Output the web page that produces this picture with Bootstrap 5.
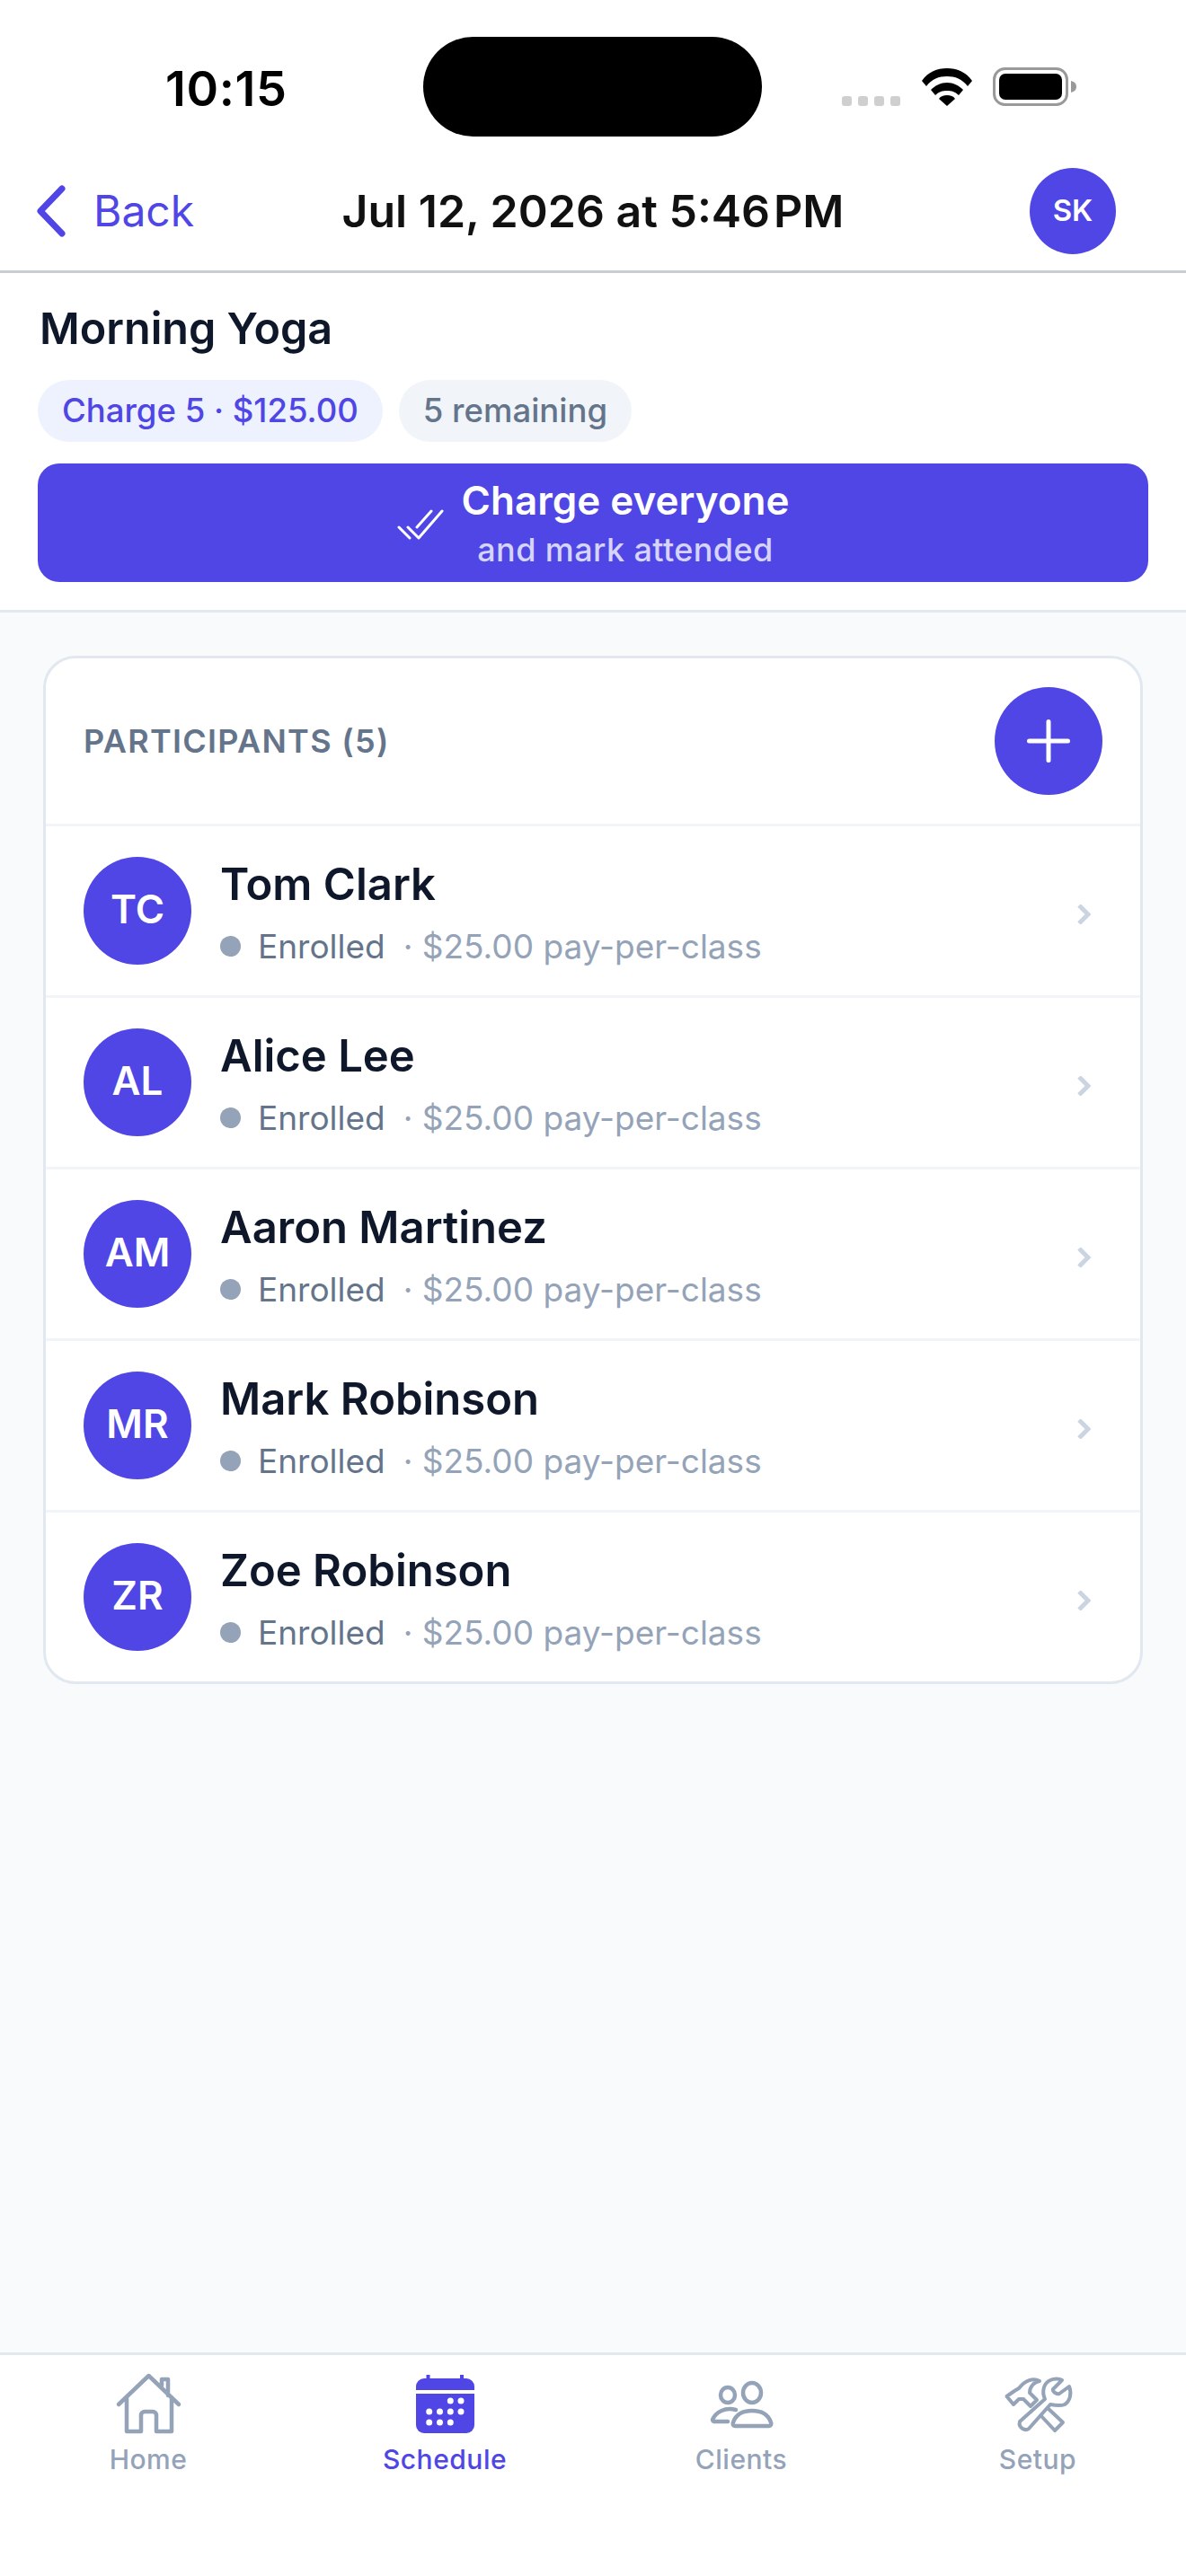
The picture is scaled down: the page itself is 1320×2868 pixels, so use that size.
<!DOCTYPE html>
<html lang="en">

<head>
    <meta charset="UTF-8">
    <meta name="viewport" content="width=device-width, initial-scale=1.0">
    <title>Morning Yoga</title>
    <link href="https://cdn.jsdelivr.net/npm/bootstrap@5.3.0/dist/css/bootstrap.min.css" rel="stylesheet">
    <style>
        body {
            font-family: Inter, "Liberation Sans", sans-serif;
            background: #f8fafc;
            color: #0f172a;
        }

        .app-screen {
            width: 1320px;
            height: 2868px;
        }

        .indigo-fill {
            background: #4f46e5;
            color: #fff;
        }

        .status-bar {
            height: 165px;
            padding: 41px 0 0 185px;
        }

        .status-time {
            width: 131px;
            flex-shrink: 0;
            margin-top: 31px;
            margin-left: -1px;
            margin-right: 1px;
            font-size: 54px;
            line-height: 54px;
            font-weight: 600;
            color: #000;
            letter-spacing: .6px;
            white-space: nowrap;
        }

        .island {
            width: 377px;
            height: 111px;
            flex-shrink: 0;
            margin-left: 155px;
            border-radius: 56px;
            background: #000;
        }

        .status-icons {
            margin-left: 89px;
            margin-top: 34px;
            height: 43px;
        }

        .signal-dot {
            width: 11px;
            height: 11px;
            border-radius: 3px;
            background: #cfcfcf;
            margin-right: 7px;
        }

        .wifi-ico {
            margin-left: 16px;
        }

        .batt-ico {
            margin-left: 22px;
        }

        .nav-row {
            height: 139px;
            padding: 4px 78px 0;
            border-bottom: 3px solid #c9ccd1;
        }

        .nav-back {
            color: #4f46e5;
            font-size: 48px;
            line-height: 60px;
            margin-left: -38px;
        }

        .back-ico {
            margin-right: 30px;
        }

        .nav-title {
            font-size: 50px;
            line-height: 60px;
            font-weight: 600;
            color: #111;
            white-space: nowrap;
        }

        .thin-gap {
            margin-left: 4px;
        }

        .user-dot {
            width: 96px;
            height: 96px;
            font-size: 33px;
            font-weight: 600;
        }

        .class-head {
            padding: 34px 42px 31px;
            border-bottom: 3px solid #e2e8f0;
        }

        .class-title {
            font-size: 48.500px;
            line-height: 56px;
            font-weight: 600;
            margin: 0 0 29px 2px;
        }

        .pill {
            height: 69px;
            padding: 0 27px;
            border-radius: 35px;
            font-size: 36.500px;
            font-weight: 500;
        }

        .pill-gap {
            gap: 18px;
        }

        .pill-charge {
            background: #eef2ff;
            color: #4f46e5;
        }

        .pill-left {
            background: #f1f5f9;
            color: #64748b;
        }

        .charge-btn {
            margin-top: 24px;
            height: 132px;
            padding-top: 4px;
            border-radius: 24px;
            background: #4f46e5;
            color: #fff;
            border: 0;
        }

        .tick-ico {
            margin-right: 20px;
        }

        .charge-main {
            font-size: 44px;
            line-height: 52px;
            font-weight: 600;
        }

        .charge-sub {
            font-size: 36px;
            line-height: 50px;
            margin-top: 4px;
            font-weight: 500;
            color: #d6d4fa;
            letter-spacing: .4px;
        }

        .people-card {
            margin: 48px 48px 0;
            border: 3px solid #e2e8f0;
            border-radius: 36px;
            overflow: hidden;
            background: #fff;
        }

        .people-head {
            height: 187px;
            padding: 0 42px;
            border-bottom: 3px solid #f1f5f9;
        }

        .people-label {
            font-size: 36px;
            font-weight: 600;
            color: #64748b;
            letter-spacing: 1.300px;
        }

        .add-btn {
            width: 120px;
            height: 120px;
            padding: 0;
            border: 0;
            background: #4f46e5;
        }

        .person-row {
            height: 191px;
            padding: 0 42px;
            border-bottom: 3px solid #f1f5f9;
        }

        .person-row:last-child {
            height: 188px;
            border-bottom: 0;
        }

        .person-dot {
            width: 120px;
            height: 120px;
            padding-bottom: 4px;
            font-size: 44px;
            font-weight: 600;
            margin-right: 32px;
        }

        .person-text {
            padding-top: 3px;
        }

        .person-name {
            font-size: 49px;
            line-height: 58px;
            font-weight: 600;
        }

        .person-sub {
            font-size: 37px;
            line-height: 44px;
            margin-top: 18px;
            color: #94a3b8;
        }

        .state-dot {
            width: 23px;
            height: 23px;
            background: #94a3b8;
            margin-right: 19px;
        }

        .state-text {
            color: #64748b;
            margin-right: 20px;
        }

        .row-chev {
            margin: 8px 13px 0 0;
        }

        .tab-bar {
            height: 249px;
            border-top: 3px solid #e2e8f0;
            background: #fff;
        }

        .tab-item {
            width: 330px;
            padding-top: 19px;
            font-size: 30px;
            line-height: 40px;
            letter-spacing: .5px;
            color: #94a3b8;
            font-weight: 500;
        }

        .tab-item svg {
            display: block;
            width: 72px;
            height: 72px;
            margin-bottom: 5px;
            overflow: visible;
        }

        .tab-on {
            color: #4f46e5;
        }
    </style>
</head>

<body>
    <div class="app-screen d-flex flex-column">
        <div class="bg-white">
            <div class="status-bar d-flex align-items-start">
                <div class="status-time">10:15</div>
                <div class="island"></div>
                <div class="status-icons d-flex align-items-end">
                    <span class="signal-dot"></span><span class="signal-dot"></span><span class="signal-dot"></span><span class="signal-dot"></span>
                    <svg class="wifi-ico" width="58" height="43" viewBox="0 0 58 43">
                        <path d="M1 15C8 5 18 1 29 1s21 4 28 14l-5 6C46 13 38 10 29 10S12 13 6 21z M11 25c5-5 11-8 18-8s13 3 18 8l-5 6c-4-4-8-5-13-5s-9 1-13 5z M20 35c2-3 5-4 9-4s7 1 9 4l-9 8z" fill="#000"/>
                    </svg>
                    <svg class="batt-ico" width="94" height="43" viewBox="0 0 94 43">
                        <rect x="1.500" y="1.500" width="81" height="40" rx="12" fill="none" stroke="#999" stroke-width="3"/>
                        <rect x="7" y="7" width="70" height="29" rx="7" fill="#000"/>
                        <path d="M87 15c4 1 6 3 6 6.500s-2 5.500-6 6.500z" fill="#999"/>
                    </svg>
                </div>
            </div>
            <div class="nav-row d-flex align-items-center">
                <div class="flex-fill w-25">
                    <div class="nav-back d-flex align-items-center">
                        <svg class="back-ico" width="34" height="58" viewBox="0 0 34 58">
                            <path d="M29 4 5 29l24 25" fill="none" stroke="#4f46e5" stroke-width="7" stroke-linecap="round" stroke-linejoin="round"/>
                        </svg>
                        Back
                    </div>
                </div>
                <div class="nav-title text-center">Jul 12, 2026 at 5:46<span class="thin-gap">PM</span></div>
                <div class="flex-fill w-25 d-flex justify-content-end">
                    <div class="user-dot rounded-circle indigo-fill d-flex align-items-center justify-content-center">SK</div>
                </div>
            </div>
            <div class="class-head">
                <h1 class="class-title">Morning Yoga</h1>
                <div class="d-flex pill-gap">
                    <span class="pill pill-charge d-flex align-items-center">Charge 5 · $125.00</span>
                    <span class="pill pill-left d-flex align-items-center">5 remaining</span>
                </div>
                <button class="charge-btn w-100 d-flex align-items-center justify-content-center">
                    <svg class="tick-ico" width="52" height="34" viewBox="0 0 52 34">
                        <path d="M2 20 14 32M12 20 24 32 50 2M22 20 38 2" fill="none" stroke="#fff" stroke-width="3" stroke-linecap="round" stroke-linejoin="round"/>
                    </svg>
                    <span class="d-flex flex-column align-items-center">
                        <span class="charge-main">Charge everyone</span>
                        <span class="charge-sub">and mark attended</span>
                    </span>
                </button>
            </div>
        </div>

        <div class="people-card">
            <div class="people-head d-flex align-items-center justify-content-between">
                <span class="people-label">PARTICIPANTS (5)</span>
                <button class="add-btn btn rounded-circle d-flex align-items-center justify-content-center">
                    <svg width="54" height="54" viewBox="0 0 54 54">
                        <path d="M27 5.500v43M5.500 27h43" fill="none" stroke="#fff" stroke-width="5" stroke-linecap="round"/>
                    </svg>
                </button>
            </div>
            <div id="people"></div>
        </div>

        <div class="flex-grow-1"></div>

        <div class="tab-bar d-flex">
            <div class="tab-item d-flex flex-column align-items-center">
                <svg viewBox="0 0 72 72">
                    <path d="M3 36 36.500 4 70 36M12 28v38h16V48a4 4 0 0 1 4-4h9a4 4 0 0 1 4 4v18h17V28M51 15V8h7v18" fill="none" stroke="#94a3b8" stroke-width="4.500" stroke-linecap="round" stroke-linejoin="round"/>
                </svg>
                Home
            </div>
            <div class="tab-item tab-on d-flex flex-column align-items-center">
                <svg viewBox="0 0 72 72">
                    <path d="M15.500 3h4v4h33.500V3h4v4H60a9 9 0 0 1 9 9v4H4v-4a9 9 0 0 1 9-9h2.500z" fill="#4f46e5"/>
                    <path d="M4 24h65v35a9 9 0 0 1-9 9H13a9 9 0 0 1-9-9z" fill="#4f46e5"/>
                    <g fill="#fff">
                        <circle cx="42.300" cy="32" r="3.500"/><circle cx="54" cy="32" r="3.500"/>
                        <circle cx="18.700" cy="44" r="3.500"/><circle cx="30.500" cy="44" r="3.500"/><circle cx="42.300" cy="44" r="3.500"/><circle cx="54" cy="44" r="3.500"/>
                        <circle cx="18.700" cy="56" r="3.500"/><circle cx="30.500" cy="56" r="3.500"/><circle cx="42.300" cy="56" r="3.500"/>
                    </g>
                </svg>
                Schedule
            </div>
            <div class="tab-item d-flex flex-column align-items-center">
                <svg viewBox="0 0 72 72">
                    <g fill="none" stroke="#94a3b8" stroke-width="4.500" stroke-linecap="round" stroke-linejoin="round">
                        <ellipse cx="21" cy="25.500" rx="8" ry="8.500"/>
                        <ellipse cx="48" cy="23" rx="10" ry="11"/>
                        <path d="M30 42c-12-3-22 2-26 11 0 1 1 2 2 2h15"/>
                        <path d="M29 60c-2 0-3-2-2-4 3-9 11-13 21-13s18 4 21 13c1 2 0 4-2 4z"/>
                    </g>
                </svg>
                Clients
            </div>
            <div class="tab-item d-flex flex-column align-items-center">
                <svg viewBox="0 0 72 72">
                    <g fill="none" stroke="#94a3b8" stroke-width="4" stroke-linecap="round" stroke-linejoin="round">
                        <path d="M44 30C40 21 43 12 50 9c4-2 10-2 13 0L53 19c-1 2 3 6 7 5l11-8c3 8 1 16-5 20-5 2-11 1-16 0L26 63c-4 3-12-1-10-8z"/>
                        <path d="M38 10C31 6 22 9 15 18l-5 3-8.500 6L9 36l6-6h5l8 8 7-7-8-8c0-7 5-12 11-13z"/>
                        <path d="M48 41 64 56l-9 9-15-16"/>
                    </g>
                </svg>
                Setup
            </div>
        </div>
    </div>

    <script>
        let people = [
            ['TC', 'Tom Clark'],
            ['AL', 'Alice Lee'],
            ['AM', 'Aaron Martinez'],
            ['MR', 'Mark Robinson'],
            ['ZR', 'Zoe Robinson']
        ];
        let list = document.getElementById('people');

        people.forEach(function (p) {
            list.innerHTML += `
                <div class="person-row d-flex align-items-center">
                    <div class="person-dot rounded-circle indigo-fill d-flex align-items-center justify-content-center flex-shrink-0">${p[0]}</div>
                    <div class="person-text flex-grow-1">
                        <div class="person-name">${p[1]}</div>
                        <div class="person-sub d-flex align-items-center">
                            <span class="state-dot rounded-circle"></span>
                            <span class="state-text">Enrolled</span>
                            <span>· $25.00 pay-per-class</span>
                        </div>
                    </div>
                    <svg class="row-chev" width="16" height="22" viewBox="0 0 16 22">
                        <path d="M3 1l10 10L3 21" fill="none" stroke="#cbd5e1" stroke-width="5"/>
                    </svg>
                </div>`;
        });
    </script>
</body>

</html>
